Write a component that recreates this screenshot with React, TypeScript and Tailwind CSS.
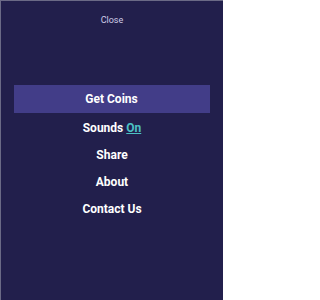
export default function App() {
  const items = ["Share", "About", "Contact Us"];

  return (
    <div
      className="w-[223px] h-[300px] bg-[#221f4c] border-t border-l border-[#6b6a86] flex flex-col items-center text-white"
      style={{ fontFamily: "Roboto, 'Liberation Sans', sans-serif" }}
    >
      <div className="mt-[13px] text-[9px] leading-[12px] text-[#cfcde8]">Close</div>

      <div className="mt-[59px] w-[196px] h-[28px] mr-[1px] bg-[#423d88] flex items-center justify-center text-[12px] font-bold">
        Get Coins
      </div>

      <div className="mt-[7px] flex flex-col items-center gap-[11px] text-[12px] leading-[16px] font-bold">
        <div>
          Sounds <span className="text-[#4cc0c4] underline">On</span>
        </div>
        {items.map((item) => (
          <div key={item}>{item}</div>
        ))}
      </div>
    </div>
  );
}
